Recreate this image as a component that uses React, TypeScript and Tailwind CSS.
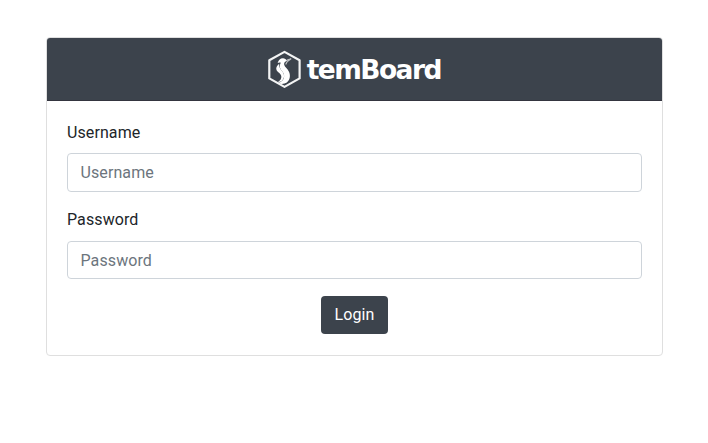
import React from "react";

function Logo() {
  return (
    <div className="flex items-center justify-center text-white">
      <svg className="h-[38px] w-[34px] shrink-0" viewBox="0 0 34 38" fill="none">
        <path d="M16.5 1.9 31.6 10.2v18.2L16.5 36.9 1.3 28.4V10.2Z" stroke="#f3f4f4" strokeWidth="2.2" strokeLinejoin="round" />
        <path d="M9.6 13C10.6 10.2 12.4 8.2 15 8.3c1.8.1 3 .9 3.6 2.2-2 1.2-2.7 2.6-2.4 4.3.5 2.4 3.6 4.1 4.9 7.2 1.7 4 .6 8.3-2.3 10.5-2.4 1.7-6.7 1.9-9.3.3 3.8-.6 6.3-2.9 6.6-6.4.3-4-3-5.4-4-8.4-.6-1.9-.2-3.6.7-5.3-1.2-.4-2.3-.2-3.2.3Z" fill="white" />
        <path d="M11.2 13.7c-2.3 1.9-3.5 4.1-2.7 6.2.9 2.4 4.3 3.2 4.8 6.2.4 2.4-1 4.7-3.3 6 2.5.2 5-1.5 5.8-4.4.7-2.5-.1-4.4-1.6-6.4-1.7-2.2-3.5-4.2-3-7.6Z" fill="white" />
        <path d="M17.2 11.3c1.5-1.3 3.3-2.1 6-2.6-2.8 1.5-4.6 3.1-5.5 5.8" stroke="white" strokeOpacity=".65" strokeWidth="1.1" />
      </svg>
      <svg className="ml-[5px] h-[38px] w-[135px] overflow-visible" viewBox="0 0 135 38">
        <text x="-0.3" y="29.4" fill="white" className="font-['DejaVu_Sans',sans-serif] text-[26.5px] font-bold tracking-[-1.55px]">temBoard</text>
      </svg>
    </div>
  );
}

function Field({ id, label, type, className }: { id: string; label: string; type: string; className: string }) {
  return (
    <div>
      <label htmlFor={id} className="block leading-6">{label}</label>
      <input
        id={id}
        type={type}
        placeholder={label}
        className={`block w-full rounded-[4px] border border-[#ced4da] bg-white px-[12.5px] tracking-[0.1px] placeholder:text-[#6c757d] placeholder:opacity-100 ${className}`}
      />
    </div>
  );
}

export default function App() {
  return (
    <main className="h-[443px] bg-white px-[46px] pt-[37px] font-[Roboto,sans-serif] text-base tracking-[0.1px] text-[#212529]">
      <section className="h-[319px] w-[617px] overflow-hidden rounded-[4px] border border-[#dfdfdf]">
        <header className="flex h-[63px] items-center justify-center border-b border-[#34353f] bg-[#3c434c]">
          <Logo />
        </header>
        <form className="px-5 pt-5" onSubmit={(e) => e.preventDefault()}>
          <Field id="username" label="Username" type="text" className="mt-2 mb-4 h-[39px]" />
          <Field id="password" label="Password" type="password" className="mt-[9px] mb-[17px] h-[38px]" />
          <div className="flex justify-center">
            <button type="submit" className="h-[38px] w-[67px] rounded-[4px] bg-[#3c434c] text-white">Login</button>
          </div>
        </form>
      </section>
    </main>
  );
}
